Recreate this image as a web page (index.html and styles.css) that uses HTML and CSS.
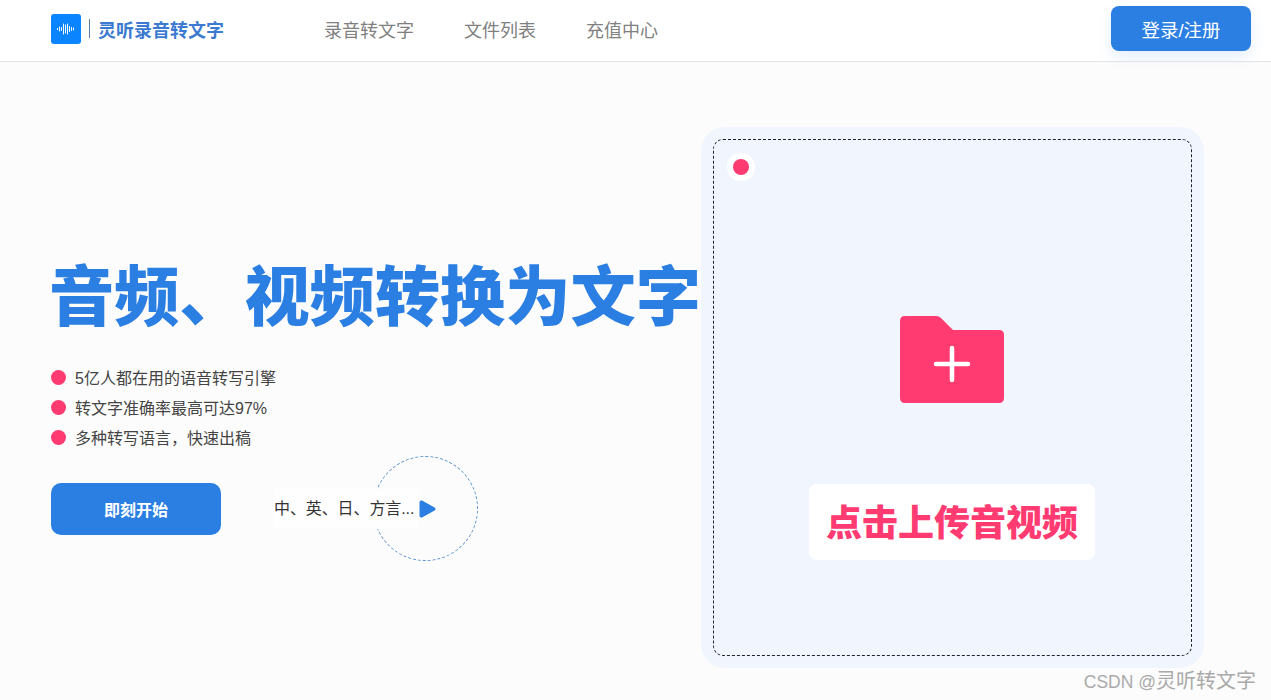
FILE: index.html
```html
<!DOCTYPE html>
<html lang="zh-CN">
<head>
  <meta charset="UTF-8">
  <meta name="viewport" content="width=device-width, initial-scale=1.0">
  <title>灵听录音转文字</title>
  <link rel="stylesheet" href="styles.css">
</head>
<body>
  <div class="head">
    <div class="logo">
      <div class="logo-icon">
        <svg width="30" height="30" viewBox="0 0 30 30">
          <path d="M6.500 14.500v1M8.500 13v4M10.500 13.500v3M12.500 10v10M14.500 11v8M16.500 10v10M18.500 12.500v5M20.500 13.500v3M22.500 14v2" stroke="#fff" stroke-width="1" stroke-linecap="round" fill="none"/>
        </svg>
      </div>
      <span class="logo-line"></span>
      <span class="logo-name">灵听录音转文字</span>
    </div>
    <div class="nav">
      <a href="#">录音转文字</a>
      <a href="#">文件列表</a>
      <a href="#">充值中心</a>
    </div>
    <button class="login">登录/注册</button>
  </div>

  <div class="main">
    <div class="intro">
      <h1 class="title">音频、视频转换为文字</h1>
      <ul class="points">
        <li>5亿人都在用的语音转写引擎</li>
        <li>转文字准确率最高可达97%</li>
        <li>多种转写语言，快速出稿</li>
      </ul>
      <div class="actions">
        <button class="start">即刻开始</button>
        <div class="langs">
          <span class="circle"></span>
          <span class="langs-text">中、英、日、方言...</span>
          <svg class="play" width="17" height="18" viewBox="0 0 17 18">
            <path d="M3 0.600 15.600 7.500a1.700 1.700 0 0 1 0 3L3 17.400A2 2 0 0 1 0.500 15.500V2.500A2 2 0 0 1 3 0.600Z" fill="#2b7fe3"/>
          </svg>
        </div>
      </div>
    </div>

    <div class="upload">
      <div class="upload-inner">
        <span class="dot"></span>
        <svg class="folder" width="104" height="87" viewBox="0 0 104 87">
          <path d="M5 0H36Q39 0 41 2L53 14H99Q104 14 104 19V82Q104 87 99 87H5Q0 87 0 82V5Q0 0 5 0Z" fill="#ff3b72"/>
          <path d="M52 32V64M36 48H68" stroke="#fff" stroke-width="4.500" stroke-linecap="round" fill="none"/>
        </svg>
        <div class="upload-label">点击上传音视频</div>
      </div>
    </div>
  </div>

  <div class="mark"><span class="mark-latin">CSDN @</span>灵听转文字</div>
</body>
</html>
```

FILE: styles.css
```css
* {
  box-sizing: border-box;
}

html,
body {
  height: 100%;
}

body {
  margin: 0;
  background-color: #fcfcfc;
  font-family: "Liberation Sans", "Noto Sans CJK SC", sans-serif;
  overflow: hidden;
  position: relative;
}

.head {
  display: flex;
  align-items: center;
  height: 62px;
  padding: 0 20px 4px 51px;
  background-color: #fff;
  border-bottom: 1px solid #e6e6e6;
}

.logo {
  display: flex;
  align-items: center;
  width: 273px;
}

.logo-icon {
  width: 30px;
  height: 30px;
  border-radius: 3px;
  background-color: #0a84ff;
}

.logo-icon svg {
  display: block;
}

.logo-line {
  width: 1px;
  height: 19px;
  margin: 0 8px;
  background-color: #5b7fa8;
}

.logo-name {
  font-size: 18px;
  font-weight: 700;
  color: #3b7ad0;
}

.nav {
  display: flex;
  gap: 50px;
  flex: 1;
}

.nav a {
  font-size: 18px;
  color: #808080;
  text-decoration: none;
}

.login {
  width: 140px;
  height: 45px;
  border: none;
  border-radius: 8px;
  background-color: #2b7fe3;
  box-shadow: 0 6px 14px rgba(43, 127, 227, 0.12);
  color: #fff;
  font-family: inherit;
  font-size: 18.500px;
}

.main {
  display: flex;
  padding: 65px 67px 0 51px;
}

.intro {
  flex-shrink: 0;
  width: 650px;
  padding-top: 131px;
}

.title {
  margin: 0 0 0 -2px;
  font-size: 65.200px;
  line-height: 80px;
  font-weight: 900;
  color: #2b7fe3;
  white-space: nowrap;
}

.points {
  list-style: none;
  margin: 24px 0 0;
  padding: 0;
}

.points li {
  display: flex;
  align-items: center;
  height: 30px;
  font-size: 16px;
  color: #444;
}

.points li::before {
  content: "";
  width: 15px;
  height: 15px;
  margin-right: 9px;
  border-radius: 50%;
  background-color: #ff3b72;
}

.actions {
  display: flex;
  align-items: center;
  margin-top: 31px;
}

.start {
  width: 170px;
  height: 52px;
  border: none;
  border-radius: 10px;
  background-color: #2b7fe3;
  color: #fff;
  font-family: inherit;
  font-size: 16px;
  font-weight: 700;
}

.langs {
  display: flex;
  align-items: center;
  position: relative;
  margin-left: 53px;
}

.langs-text {
  position: relative;
  padding: 10px 5px 10px 0;
  background-color: #fefefe;
  font-size: 16px;
  line-height: 20px;
  letter-spacing: -0.100px;
  color: #333;
}

.circle {
  position: absolute;
  left: 99px;
  top: -33px;
  width: 105px;
  height: 105px;
  border: 1px dashed #5a93cc;
  border-radius: 50%;
}

.play {
  position: relative;
}

.upload {
  flex-shrink: 0;
  width: 503px;
  height: 541px;
  padding: 12px;
  border-radius: 24px;
  background-color: #f1f6fe;
}

.upload-inner {
  display: flex;
  flex-direction: column;
  align-items: center;
  position: relative;
  height: 100%;
  padding-top: 176px;
  border: 1px dashed #1a2233;
  border-radius: 10px;
}

.dot {
  position: absolute;
  left: 19px;
  top: 19px;
  width: 16px;
  height: 16px;
  border-radius: 50%;
  background-color: #ff3b72;
  box-shadow: 0 0 0 6px #fff;
}

.folder {
  margin-right: 1px;
}

.upload-label {
  margin: 81px 1px 0 0;
  padding: 16px 17px 12px;
  border-radius: 8px;
  background-color: #fff;
  font-size: 36px;
  line-height: 48px;
  font-weight: 900;
  color: #ff3b72;
}

.mark {
  position: absolute;
  right: 15px;
  bottom: 6px;
  font-size: 20px;
  color: #aaa;
}

.mark-latin {
  font-size: 17.500px;
}
```
